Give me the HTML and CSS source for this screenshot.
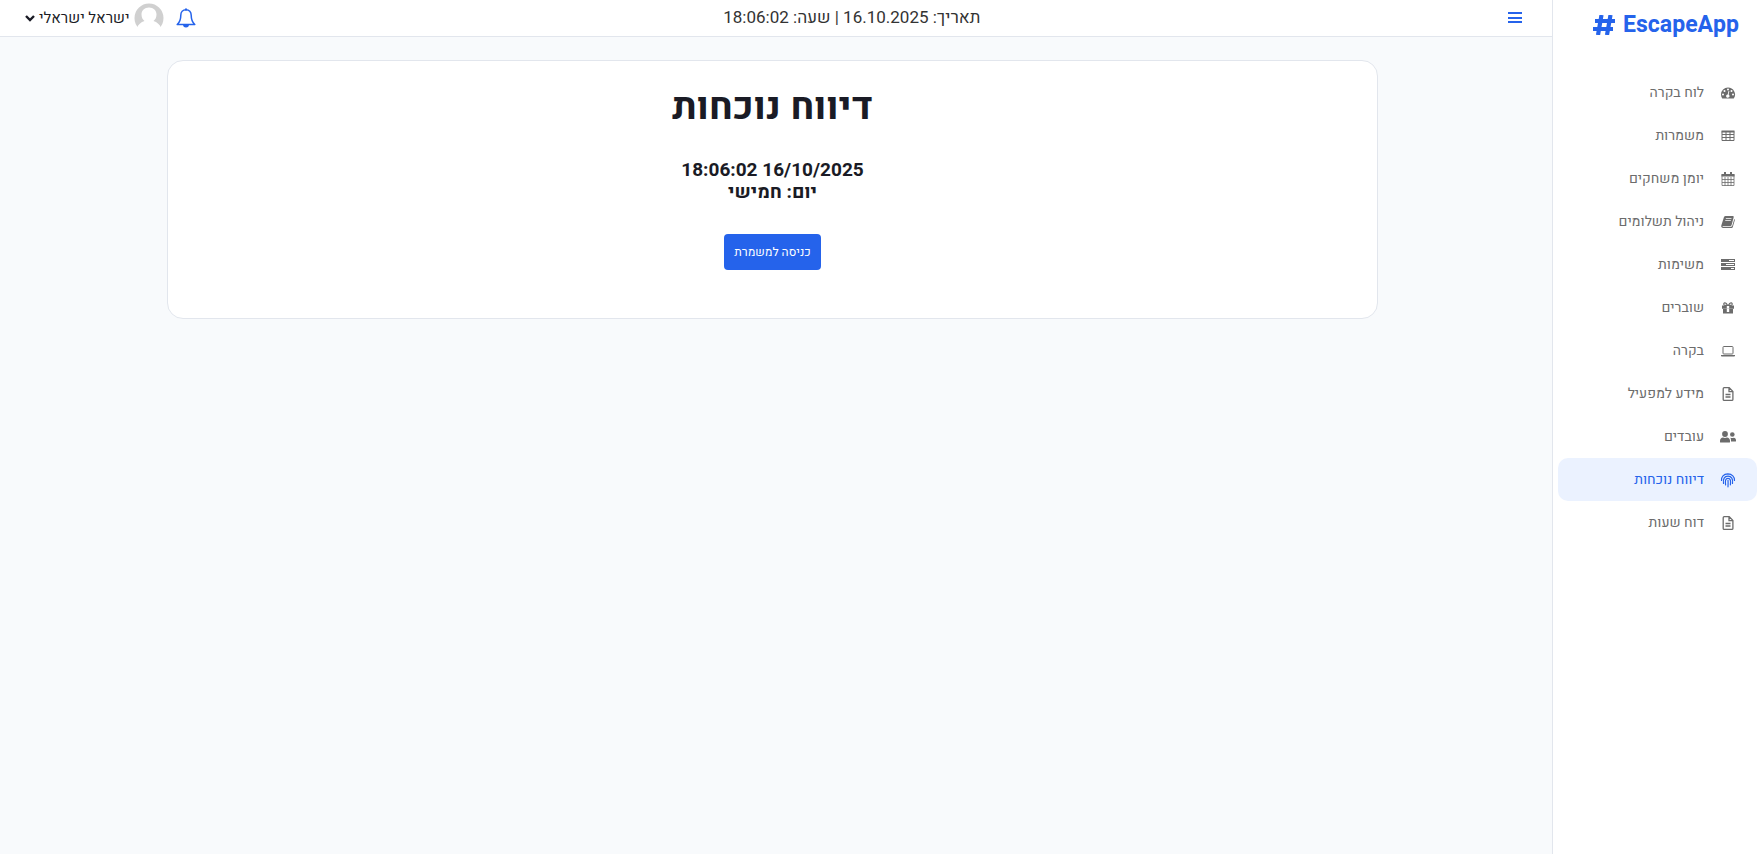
FILE: index.html
```html
<!DOCTYPE html>
<html lang="he" dir="rtl">
<head>
<meta charset="utf-8">
<meta name="viewport" content="width=device-width, initial-scale=1">
<title>EscapeApp</title>
<link rel="stylesheet" href="styles.css">
</head>
<body class="app">
<aside class="sidebar">
  <a class="brand" href="#" dir="ltr">
    <svg class="brand-icon" viewBox="0 0 22 20" aria-hidden="true"><path d="M8.500 0 5 20M17.500 0l-3.500 20M2 6h20M0 14h20" fill="none" stroke="currentColor" stroke-width="4.200"/></svg>
    <span>EscapeApp</span>
  </a>
  <nav class="menu">
    <a class="item" href="#"><svg class="icon" viewBox="0 0 16 16" aria-hidden="true"><path fill-rule="evenodd" d="M8 2.500a7 7 0 0 0-7 7c0 1.400.4 2.700 1.100 3.800.1.200.3.200.5.200h10.800c.2 0 .4 0 .5-.2A7 7 0 0 0 8 2.500zM3 8.500a1 1 0 1 1 0 2 1 1 0 0 1 0-2zM4.500 5a1 1 0 1 1 0 2 1 1 0 0 1 0-2zM8 3.500a1 1 0 1 1 0 2 1 1 0 0 1 0-2zM11.500 5a1 1 0 1 1 0 2 1 1 0 0 1 0-2zM13 8.500a1 1 0 1 1 0 2 1 1 0 0 1 0-2zM9.400 6.300l-.8 3.300a1.700 1.700 0 1 1-.9-.2l.8-3.300z"/></svg>לוח בקרה</a>
    <a class="item" href="#"><svg class="icon" viewBox="0 0 16 16" aria-hidden="true"><path d="M2 3.500h12v9H2zM2 6.500h12M2 9.500h12M6 4v9M10 4v9" fill="none" stroke="currentColor"/><path d="M1.500 2.500h13v2h-13z"/></svg>משמרות</a>
    <a class="item" href="#"><svg class="icon" viewBox="0 0 16 16" aria-hidden="true"><path d="M2 3.500h12V14.500H2zM2 8.500h12M2 11.500h12M5 6v9M8 6v9M11 6v9" fill="none" stroke="currentColor" stroke-width=".8"/><path d="M1.500 3h13v2.500h-13zM4 1h2v3H4zM10 1h2v3h-2z"/></svg>יומן משחקים</a>
    <a class="item" href="#"><svg class="icon" viewBox="0 0 16 16" aria-hidden="true"><path fill-rule="evenodd" d="M5.500 2h7.200c.8 0 1.200.6 1 1.300L11.600 11c-.2.700-.8 1-1.400 1H3c-.5 0-.6.500-.1.800h8.200c.5 0 .9-.2 1.100-.8l2.100-7c.6.400.6.900.5 1.300l-2 6.700c-.2.600-.8 1-1.400 1H3.200C1.800 14 .9 12.700 1.300 11.500l2.600-8.300C4.200 2.400 4.800 2 5.500 2zM6 4.200l-.3.800h5.600l.3-.8zM5.400 6.300l-.3.800h5.600l.3-.8z"/></svg>ניהול תשלומים</a>
    <a class="item" href="#"><svg class="icon" viewBox="0 0 16 16" aria-hidden="true"><path fill-rule="evenodd" d="M1 2h14v3H1zM1 6h14v3H1zM1 10h14v3H1zM9 3v1h5V3zM6 7v1h8V7zM11 11v1h3v-1z"/></svg>משימות</a>
    <a class="item" href="#"><svg class="icon" viewBox="0 0 16 16" aria-hidden="true"><path fill-rule="evenodd" d="M2 5.500h12v3.200H2zM3 9h10v4.500H3zM6.800 6v6h2.400V6z"/><path d="M7.500 5.300C6.600 3.200 5.600 2.600 4.600 2.900 3.300 3.300 3.600 5.300 5 5.300h6c1.400 0 1.700-2 .4-2.400-1-.3-2 .3-2.900 2.400" fill="none" stroke="currentColor" stroke-width="1.200"/></svg>שוברים</a>
    <a class="item" href="#"><svg class="icon" viewBox="0 0 16 16" aria-hidden="true"><rect x="3" y="3.500" width="10" height="7.500" rx=".8" fill="none" stroke="currentColor"/><path d="M1 12h14v.7c0 .5-.6.800-1.200.8H2.200c-.7 0-1.200-.3-1.200-.8z"/></svg>בקרה</a>
    <a class="item" href="#"><svg class="icon" viewBox="0 0 16 16" aria-hidden="true"><path d="M4.200 1.700h5l3.700 3.700v8a1 1 0 0 1-1 1H4.200a1 1 0 0 1-1-1V2.700a1 1 0 0 1 1-1zM9 2v3.700h3.700M5.500 8.500h5M5.500 11h5" fill="none" stroke="currentColor" stroke-width="1.300"/></svg>מידע למפעיל</a>
    <a class="item" href="#"><svg class="icon" viewBox="0 0 16 16" aria-hidden="true"><circle cx="5" cy="5" r="2.900"/><circle cx="12.300" cy="5.500" r="2.300"/><path d="M0 13v-1.300C0 9.800 1.400 8.500 3 8.500c1.300.6 2.700.6 4 0 1.600 0 3 1.300 3 3.200V13q0 .6-.7.600H.7Q0 13.600 0 13zM10.300 8.700c1.300.5 2.300.5 3.500 0 1.300 0 2.200 1.100 2.200 2.500v.8q0 .6-.6.600H11c.1-1.700-.1-2.900-.7-3.900z"/></svg>עובדים</a>
    <a class="item active" href="#" aria-current="page"><svg class="icon" viewBox="0 0 16 16" aria-hidden="true"><path d="M1.500 8.500c-.2-3.500 2-6.500 6.400-6.600 4.100 0 6.900 2.900 6.600 6.600M3.500 11.500C2.800 7 4.400 4.100 8 4.100c3.500 0 5.200 3 4.500 7.400M5.600 12.800C5 8.500 5.500 6.300 8 6.300c2.500 0 2.900 2.500 2.400 6.500M8 8.300c.2 2.200.1 4.200 0 6.500" fill="none" stroke="currentColor" stroke-width="1.200" stroke-linecap="round"/></svg>דיווח נוכחות</a>
    <a class="item" href="#"><svg class="icon" viewBox="0 0 16 16" aria-hidden="true"><path d="M4.200 1.700h5l3.700 3.700v8a1 1 0 0 1-1 1H4.200a1 1 0 0 1-1-1V2.700a1 1 0 0 1 1-1zM9 2v3.700h3.700M5.500 8.500h5M5.500 11h5" fill="none" stroke="currentColor" stroke-width="1.300"/></svg>דוח שעות</a>
  </nav>
</aside>
<div class="page">
  <header class="topbar">
    <button class="plain toggle" type="button" aria-label="תפריט"><svg class="bars" viewBox="0 0 14 12" aria-hidden="true"><path d="M0 0h14v2H0zM0 5h14v2H0zM0 9h14v2H0z"/></svg></button>
    <div class="clock">תאריך: 16.10.2025 | שעה: 18:06:02</div>
    <div class="account">
      <button class="plain" type="button" aria-label="התראות"><svg class="bell" viewBox="0 0 20 20" aria-hidden="true"><path d="M10 1.800c-3.200 0-5.200 2.300-5.200 5.400 0 4.300-1 7-3.600 9.300h17.600c-2.600-2.300-3.600-5-3.600-9.300 0-3.100-2-5.400-5.200-5.400z" fill="none" stroke="currentColor" stroke-width="1.500" stroke-linejoin="round"/><path d="M9 .5h2v2H9zM7 16.500h6a3 3 0 0 1-6 0z"/></svg></button>
      <button class="plain user" type="button">
        <svg class="avatar" viewBox="0 0 30 30" aria-hidden="true"><circle cx="15" cy="15" r="14.500" fill="#d0d0d0"/><path d="M15 4.500c4.500 0 7.500 3 7.500 7 0 3-1.300 5.200-3 6.500 3.500 1.200 6.500 3.500 7.500 7V30H3v-5c1-3.500 4-5.800 7.500-7-1.700-1.300-3-3.500-3-6.500 0-4 3-7 7.500-7z" fill="#fff"/></svg>
        <span>ישראל ישראלי</span>
        <svg class="chevron" viewBox="0 0 10 8" aria-hidden="true"><path d="M1 2l4 4 4-4" fill="none" stroke="currentColor" stroke-width="2.400"/></svg>
      </button>
    </div>
  </header>
  <main class="main">
    <section class="card">
      <h1 class="title">דיווח נוכחות</h1>
      <p class="stamp">16/10/2025 18:06:02<br>יום: חמישי</p>
      <button class="enter" type="button">כניסה למשמרת</button>
    </section>
  </main>
</div>
</body>
</html>
```
FILE: styles.css
```css
* { box-sizing: border-box; }
.app {
  margin: 0;
  min-height: 100vh;
  display: flex;
  background: #f8fafc;
  color: #1a1b25;
  font-family: Heebo, Roboto, "Open Sans", "Noto Sans", sans-serif;
  font-size: 16px;
}
svg { display: block; flex: none; fill: currentColor; }
.plain { border: 0; padding: 0; background: none; font: inherit; color: inherit; cursor: pointer; }

.sidebar { flex: none; width: 206px; background: #fff; border-left: 1px solid #e2e6ed; }
.brand {
  display: flex; align-items: center; justify-content: flex-end; gap: 8px;
  height: 49px; margin-bottom: 22px; padding-right: 19px;
  color: #2563eb; font-size: 23px; font-weight: 700; text-decoration: none;
}
.brand-icon { width: 22px; height: 20px; }
.menu { display: flex; flex-direction: column; padding: 0 1px 0 5px; }
.item {
  display: flex; align-items: center; gap: 16px;
  height: 43px; padding-right: 21px; border-radius: 10px;
  color: #6c6c6c; font-size: 14px; text-decoration: none;
}
.active { background: #ebf2ff; color: #2563eb; }
.icon { width: 16px; height: 16px; }

.page { flex: 1; min-width: 0; }
.topbar {
  display: flex; align-items: center; justify-content: space-between;
  height: 37px; padding: 0 30px 0 25px;
  background: #fff; border-bottom: 1px solid #e2e6ed;
}
.toggle, .bell { color: #2563eb; }
.bars { width: 14px; height: 12px; }
.clock { color: #333; font-size: 17px; line-height: 18px; }
.account, .user { display: flex; align-items: center; }
.account { gap: 12px; }
.plain.user { gap: 4px; color: #1a1b25; font-size: 15px; }
.bell { width: 20px; height: 20px; }
.avatar { width: 30px; height: 30px; }
.chevron { width: 10px; height: 8px; }

.main { padding: 23px 174px 24px 167px; }
.card {
  display: flex; flex-direction: column; align-items: center;
  padding: 22px 20px 48px;
  background: #fff; border: 1px solid #e2e6ed; border-radius: 16px;
  text-align: center;
}
.title { margin: 0 0 28px; font-size: 38px; line-height: 48px; font-weight: 700; }
.stamp { margin: 0 0 31px; font-size: 19px; line-height: 22px; font-weight: 700; }
.enter {
  height: 36px; padding: 0 10px; border: 0; border-radius: 4px;
  background: #2563eb; color: #fff; font-family: inherit; font-size: 12px; cursor: pointer;
}
```
